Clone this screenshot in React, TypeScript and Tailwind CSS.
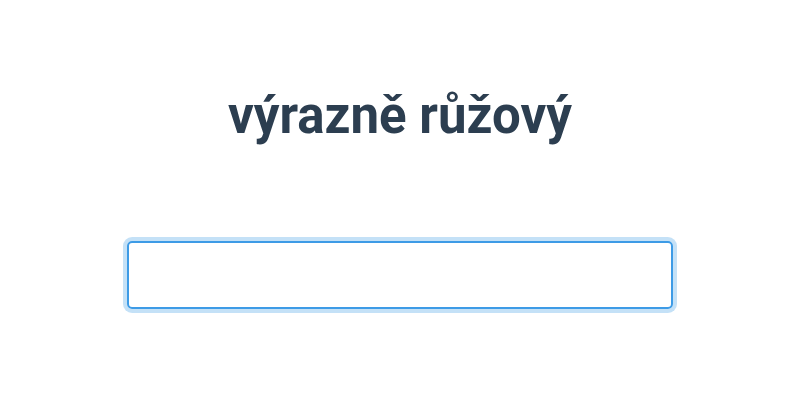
export default function App() {
  return (
    <div className="flex h-[400px] w-[800px] flex-col items-center bg-white font-['Roboto',sans-serif]">
      <h1 className="mt-[86px] text-[51px] leading-[60px] font-bold text-[#2c3e50]">výrazně růžový</h1>
      <input
        type="text"
        className="mt-[95px] h-[68px] w-[546px] rounded-[5px] border-2 border-[#3d9be6] outline-none ring-4 ring-[#3d9be6]/30"
      />
    </div>
  );
}
